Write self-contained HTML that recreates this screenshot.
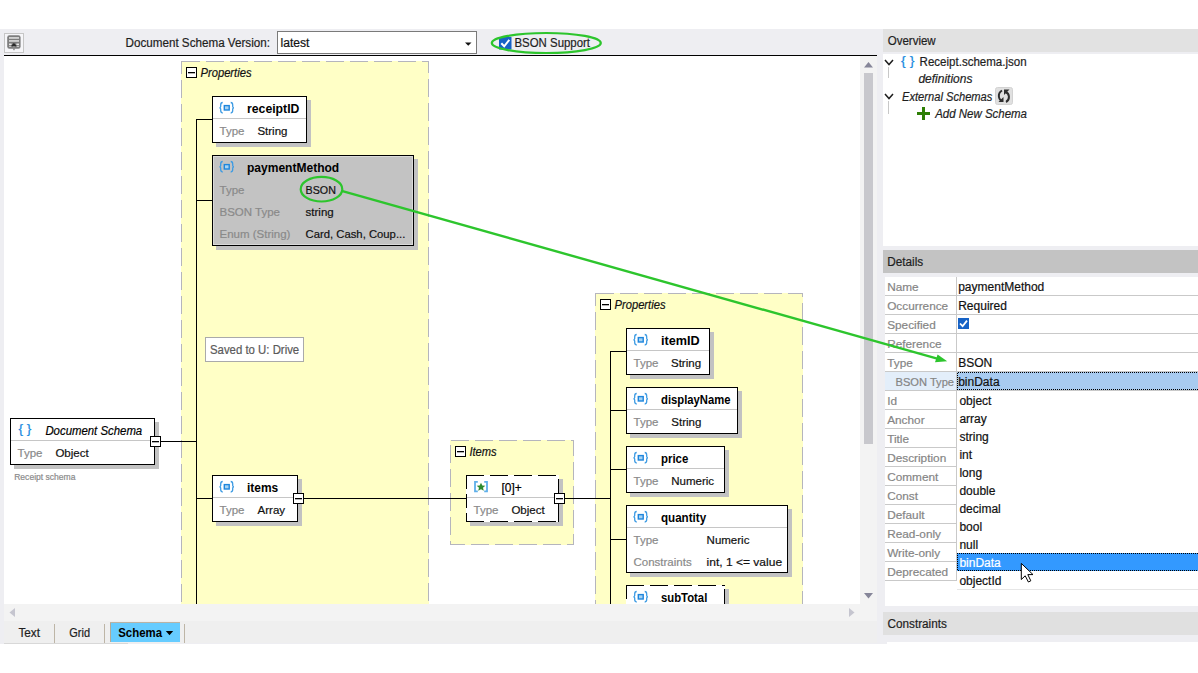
<!DOCTYPE html><html><head><meta charset="utf-8"><style>html,body{margin:0;padding:0;background:#fff;overflow:hidden;width:1198px;height:673px}svg{display:block}text{font-family:"Liberation Sans", sans-serif}</style></head><body>
<svg width="1198" height="673" viewBox="0 0 1198 673">
<g shape-rendering="crispEdges">
<rect x="0" y="29" width="1198" height="615" fill="#EEEEF2" />
<rect x="4.5" y="33.5" width="19" height="19" fill="#F6F6F9" stroke="#C6C6C6" stroke-width="1"/>
</g>
<g>
<rect x="7.2" y="35.2" width="13.4" height="13.6" rx="2.2" fill="#7E7E7E"/>
<rect x="9" y="37.3" width="10" height="1.3" fill="#F4F4F4"/>
<rect x="9" y="40.3" width="10" height="1.3" fill="#F4F4F4"/>
<rect x="9" y="43.6" width="2.6" height="1.3" fill="#F4F4F4"/><rect x="16.4" y="43.6" width="2.6" height="1.3" fill="#F4F4F4"/>
<rect x="9" y="45.8" width="2.6" height="1" fill="#D8D8D8"/><rect x="16.4" y="45.8" width="2.6" height="1" fill="#D8D8D8"/>
<path d="M10.8 46.3 L13.9 43 L17 46.3 Z" fill="#2A2A2A"/><rect x="13.2" y="46" width="1.5" height="4.2" fill="#8A8A8A"/>
</g>
<text x="125.5" y="47.2" font-size="12" fill="#1E1E1E" font-weight="normal" font-style="normal" textLength="144.5" lengthAdjust="spacingAndGlyphs" stroke="#1E1E1E" stroke-width="0.2" >Document Schema Version:</text>
<g shape-rendering="crispEdges">
<rect x="277.5" y="31.5" width="199" height="22" fill="#fff" stroke="#7A7A7A" stroke-width="1"/>
</g>
<text x="280.5" y="46.5" font-size="12" fill="#111" font-weight="normal" font-style="normal" textLength="29" lengthAdjust="spacingAndGlyphs" stroke="#111" stroke-width="0.2" >latest</text>
<path d="M465 42.5 L471.5 42.5 L468.25 45.8 Z" fill="#111"/>
<rect x="499" y="37" width="12.5" height="12.5" fill="#1662C6"/>
<path d="M501.3 43.2 L504.2 46.3 L509.3 39.8" fill="none" stroke="#fff" stroke-width="2"/>
<text x="514.5" y="46.8" font-size="12" fill="#1E1E1E" font-weight="normal" font-style="normal" textLength="75.5" lengthAdjust="spacingAndGlyphs" stroke="#1E1E1E" stroke-width="0.2" >BSON Support</text>
<ellipse cx="546.3" cy="43" rx="54.5" ry="10" fill="none" stroke="#2DC52D" stroke-width="2.2"/>
<g shape-rendering="crispEdges">
<rect x="4" y="55" width="873" height="1" fill="#000" />
<rect x="4" y="56" width="856" height="548" fill="#FFFFFF" />
<rect x="860" y="56" width="17" height="548" fill="#F3F3F3" />
<rect x="864" y="73" width="9" height="371" fill="#C8C8CD" />
<rect x="4" y="604" width="873" height="17" fill="#F3F3F3" />
<rect x="4" y="621" width="873" height="22" fill="#EFEFEF" />
</g>
<path d="M864 67.5 L873 67.5 L868.5 62 Z" fill="#868699"/>
<path d="M864 593 L873 593 L868.5 598.5 Z" fill="#868699"/>
<path d="M15 608 L15 617 L9.5 612.5 Z" fill="#C5C5CF"/>
<path d="M849 608 L849 617 L854.5 612.5 Z" fill="#C5C5CF"/>
<text x="18.4" y="637" font-size="12" fill="#1E1E1E" font-weight="normal" font-style="normal" textLength="21.6" lengthAdjust="spacingAndGlyphs" stroke="#1E1E1E" stroke-width="0.2" >Text</text>
<text x="69.3" y="637" font-size="12" fill="#1E1E1E" font-weight="normal" font-style="normal" textLength="20.7" lengthAdjust="spacingAndGlyphs" stroke="#1E1E1E" stroke-width="0.2" >Grid</text>
<g shape-rendering="crispEdges">
<rect x="54" y="624" width="1" height="19" fill="#BDB5A6" />
<rect x="104" y="624" width="1" height="19" fill="#BDB5A6" />
<rect x="110" y="622" width="70" height="20" fill="#66CCFF" />
<rect x="110" y="622" width="1" height="20" fill="#B3A995" />
<rect x="110" y="622" width="70" height="1" fill="#B9B3A5" />
<rect x="184" y="624" width="1" height="19" fill="#BDB5A6" />
<rect x="4" y="643" width="124" height="1" fill="#D8D8D8" />
</g>
<text x="118.2" y="637" font-size="12" fill="#000" font-weight="bold" font-style="normal" textLength="43.8" lengthAdjust="spacingAndGlyphs" >Schema</text>
<path d="M165.8 631 L173.2 631 L169.5 635.3 Z" fill="#000"/>
<g shape-rendering="crispEdges">
<rect x="883" y="29" width="315" height="23" fill="#E2E2E2" />
<rect x="883" y="52" width="315" height="2" fill="#EEEEF2" />
<rect x="883" y="54" width="315" height="192" fill="#FFFFFF" />
<rect x="883" y="250" width="315" height="23" fill="#C3C3C3" />
<rect x="885" y="277" width="313" height="329" fill="#FFFFFF" />
<rect x="883" y="612" width="315" height="23" fill="#E0E0E0" />
<rect x="887" y="642" width="311" height="2" fill="#FFFFFF" />
</g>
<text x="887.7" y="44.6" font-size="12" fill="#1E1E1E" font-weight="normal" font-style="normal" textLength="48" lengthAdjust="spacingAndGlyphs" stroke="#1E1E1E" stroke-width="0.2" >Overview</text>
<text x="887.2" y="265.7" font-size="12" fill="#1E1E1E" font-weight="normal" font-style="normal" textLength="36" lengthAdjust="spacingAndGlyphs" stroke="#1E1E1E" stroke-width="0.2" >Details</text>
<text x="887.5" y="627.8" font-size="12" fill="#1E1E1E" font-weight="normal" font-style="normal" textLength="59.4" lengthAdjust="spacingAndGlyphs" stroke="#1E1E1E" stroke-width="0.2" >Constraints</text>
<path d="M885 60 L889 64.5 L893 60" fill="none" stroke="#1E1E1E" stroke-width="1.5"/>
<path d="M885 94 L889 98.5 L893 94" fill="none" stroke="#1E1E1E" stroke-width="1.5"/>
<g shape-rendering="crispEdges">
<rect x="888" y="67" width="1" height="11" fill="#C8C8C8" />
<rect x="888" y="101" width="1" height="13" fill="#C8C8C8" />
</g>
<text x="901" y="65.2" font-size="12" fill="#1A8AE0" font-weight="normal" font-style="normal" textLength="13.4" lengthAdjust="spacingAndGlyphs" stroke="#1A8AE0" stroke-width="0.2" >{ }</text>
<text x="919.6" y="66" font-size="12" fill="#1E1E1E" font-weight="normal" font-style="normal" textLength="107" lengthAdjust="spacingAndGlyphs" stroke="#1E1E1E" stroke-width="0.2" >Receipt.schema.json</text>
<text x="918.4" y="82.7" font-size="12" fill="#1E1E1E" font-weight="normal" font-style="italic" textLength="54" lengthAdjust="spacingAndGlyphs" stroke="#1E1E1E" stroke-width="0.2" >definitions</text>
<text x="902" y="100.8" font-size="12" fill="#1E1E1E" font-weight="normal" font-style="italic" textLength="90.4" lengthAdjust="spacingAndGlyphs" stroke="#1E1E1E" stroke-width="0.2" >External Schemas</text>
<rect x="995.5" y="87.5" width="17" height="17" rx="2" fill="#E0E0E0" stroke="#D2D2D2"/>
<path d="M1002 90.5 C997.5 93 998 100 1002.5 101" fill="none" stroke="#2E2E2E" stroke-width="2"/>
<path d="M998.5 102 L1003.5 102 L1003.5 97 Z" fill="#2E2E2E"/>
<path d="M1005.5 92 C1010 93.5 1010 100 1006 102" fill="none" stroke="#2E2E2E" stroke-width="2"/>
<path d="M1004 89.5 L1009.5 89.5 L1004 95 Z" fill="#2E2E2E"/>
<g shape-rendering="crispEdges">
<rect x="917" y="112" width="13" height="3" fill="#2E7F06" />
<rect x="922" y="107" width="3" height="13" fill="#2E7F06" />
</g>
<text x="935.2" y="118" font-size="12" fill="#1E1E1E" font-weight="normal" font-style="italic" textLength="91.8" lengthAdjust="spacingAndGlyphs" stroke="#1E1E1E" stroke-width="0.2" >Add New Schema</text>
<g shape-rendering="crispEdges">
<rect x="885" y="372" width="71" height="18" fill="#E3EEFA" />
<rect x="957" y="372" width="241" height="18" fill="#A8CBF0" />
<rect x="885" y="295" width="313" height="1" fill="#C9C9C9" />
<rect x="885" y="314" width="313" height="1" fill="#C9C9C9" />
<rect x="885" y="333" width="313" height="1" fill="#C9C9C9" />
<rect x="885" y="352" width="313" height="1" fill="#C9C9C9" />
<rect x="885" y="371" width="313" height="1" fill="#C9C9C9" />
<rect x="885" y="390" width="313" height="1" fill="#C9C9C9" />
<rect x="885" y="409" width="71" height="1" fill="#C9C9C9" />
<rect x="885" y="428" width="71" height="1" fill="#C9C9C9" />
<rect x="885" y="447" width="71" height="1" fill="#C9C9C9" />
<rect x="885" y="466" width="71" height="1" fill="#C9C9C9" />
<rect x="885" y="485" width="71" height="1" fill="#C9C9C9" />
<rect x="885" y="504" width="71" height="1" fill="#C9C9C9" />
<rect x="885" y="523" width="71" height="1" fill="#C9C9C9" />
<rect x="885" y="542" width="71" height="1" fill="#C9C9C9" />
<rect x="885" y="561" width="71" height="1" fill="#C9C9C9" />
<rect x="885" y="580" width="71" height="1" fill="#C9C9C9" />
<rect x="956" y="277" width="1" height="304" fill="#C9C9C9" />
</g>
<text x="887.2" y="291" font-size="11.8" fill="#858585" font-weight="normal" font-style="normal" stroke="#858585" stroke-width="0.2" >Name</text>
<text x="887.2" y="310" font-size="11.8" fill="#858585" font-weight="normal" font-style="normal" stroke="#858585" stroke-width="0.2" >Occurrence</text>
<text x="887.2" y="329" font-size="11.8" fill="#858585" font-weight="normal" font-style="normal" stroke="#858585" stroke-width="0.2" >Specified</text>
<text x="887.2" y="348" font-size="11.8" fill="#858585" font-weight="normal" font-style="normal" stroke="#858585" stroke-width="0.2" >Reference</text>
<text x="887.2" y="367" font-size="11.8" fill="#858585" font-weight="normal" font-style="normal" stroke="#858585" stroke-width="0.2" >Type</text>
<text x="895.5" y="386" font-size="11.8" fill="#858585" font-weight="normal" font-style="normal" textLength="58.5" lengthAdjust="spacingAndGlyphs" stroke="#858585" stroke-width="0.2" >BSON Type</text>
<text x="887.2" y="405" font-size="11.8" fill="#858585" font-weight="normal" font-style="normal" stroke="#858585" stroke-width="0.2" >Id</text>
<text x="887.2" y="424" font-size="11.8" fill="#858585" font-weight="normal" font-style="normal" stroke="#858585" stroke-width="0.2" >Anchor</text>
<text x="887.2" y="443" font-size="11.8" fill="#858585" font-weight="normal" font-style="normal" stroke="#858585" stroke-width="0.2" >Title</text>
<text x="887.2" y="462" font-size="11.8" fill="#858585" font-weight="normal" font-style="normal" stroke="#858585" stroke-width="0.2" >Description</text>
<text x="887.2" y="481" font-size="11.8" fill="#858585" font-weight="normal" font-style="normal" stroke="#858585" stroke-width="0.2" >Comment</text>
<text x="887.2" y="500" font-size="11.8" fill="#858585" font-weight="normal" font-style="normal" stroke="#858585" stroke-width="0.2" >Const</text>
<text x="887.2" y="519" font-size="11.8" fill="#858585" font-weight="normal" font-style="normal" stroke="#858585" stroke-width="0.2" >Default</text>
<text x="887.2" y="538" font-size="11.8" fill="#858585" font-weight="normal" font-style="normal" stroke="#858585" stroke-width="0.2" >Read-only</text>
<text x="887.2" y="557" font-size="11.8" fill="#858585" font-weight="normal" font-style="normal" stroke="#858585" stroke-width="0.2" >Write-only</text>
<text x="887.2" y="576" font-size="11.8" fill="#858585" font-weight="normal" font-style="normal" stroke="#858585" stroke-width="0.2" >Deprecated</text>
<text x="958.2" y="291" font-size="12" fill="#111" font-weight="normal" font-style="normal" stroke="#111" stroke-width="0.2" >paymentMethod</text>
<text x="958.2" y="310" font-size="12" fill="#111" font-weight="normal" font-style="normal" stroke="#111" stroke-width="0.2" >Required</text>
<text x="958.2" y="367" font-size="12" fill="#111" font-weight="normal" font-style="normal" stroke="#111" stroke-width="0.2" >BSON</text>
<text x="958.2" y="386" font-size="12" fill="#111" font-weight="normal" font-style="normal" stroke="#111" stroke-width="0.2" >binData</text>
<rect x="958" y="318" width="11" height="11" fill="#1662C6"/>
<path d="M960 323.5 L962.6 326.2 L967 320.6" fill="none" stroke="#fff" stroke-width="1.8"/>
<defs><pattern id="dh" x="0" y="0" width="2" height="2" patternUnits="userSpaceOnUse"><rect x="0" y="0" width="1" height="1" fill="#000"/><rect x="1" y="1" width="1" height="1" fill="#000"/></pattern></defs>
<g shape-rendering="crispEdges">
<rect x="957" y="372" width="241" height="1" fill="url(#dh)" />
<rect x="957" y="389" width="241" height="1" fill="url(#dh)" />
<rect x="957" y="372" width="1" height="18" fill="url(#dh)" />
</g>
<g shape-rendering="crispEdges">
<rect x="957" y="391" width="241" height="198" fill="#FFFFFF" />
<rect x="957" y="589" width="241" height="1" fill="#E6E6E6" />
<rect x="957" y="553" width="241" height="18" fill="#3399FF" />
</g>
<g shape-rendering="crispEdges">
<rect x="957" y="553" width="241" height="1" fill="url(#dh)" />
<rect x="957" y="570" width="241" height="1" fill="url(#dh)" />
<rect x="957" y="553" width="1" height="18" fill="url(#dh)" />
</g>
<text x="959.4" y="404.5" font-size="12" fill="#111" font-weight="normal" font-style="normal" stroke="#111" stroke-width="0.2" >object</text>
<text x="959.4" y="422.5" font-size="12" fill="#111" font-weight="normal" font-style="normal" stroke="#111" stroke-width="0.2" >array</text>
<text x="959.4" y="440.5" font-size="12" fill="#111" font-weight="normal" font-style="normal" stroke="#111" stroke-width="0.2" >string</text>
<text x="959.4" y="458.5" font-size="12" fill="#111" font-weight="normal" font-style="normal" stroke="#111" stroke-width="0.2" >int</text>
<text x="959.4" y="476.5" font-size="12" fill="#111" font-weight="normal" font-style="normal" stroke="#111" stroke-width="0.2" >long</text>
<text x="959.4" y="494.5" font-size="12" fill="#111" font-weight="normal" font-style="normal" stroke="#111" stroke-width="0.2" >double</text>
<text x="959.4" y="512.5" font-size="12" fill="#111" font-weight="normal" font-style="normal" stroke="#111" stroke-width="0.2" >decimal</text>
<text x="959.4" y="530.5" font-size="12" fill="#111" font-weight="normal" font-style="normal" stroke="#111" stroke-width="0.2" >bool</text>
<text x="959.4" y="548.5" font-size="12" fill="#111" font-weight="normal" font-style="normal" stroke="#111" stroke-width="0.2" >null</text>
<text x="959.4" y="566.5" font-size="12" fill="#fff" font-weight="normal" font-style="normal" stroke="#fff" stroke-width="0.2" >binData</text>
<text x="959.4" y="584.5" font-size="12" fill="#111" font-weight="normal" font-style="normal" stroke="#111" stroke-width="0.2" >objectId</text>
<path d="M1021.3 563.4 L1021.3 579.5 L1025.2 575.8 L1028.4 582 L1030.8 580.8 L1027.8 574.6 L1033 574.6 Z" fill="#fff" stroke="#000" stroke-width="1"/>
<svg x="4" y="56" width="856" height="548" viewBox="4 56 856 548" overflow="hidden">
<rect x="181" y="61" width="248" height="600" fill="#FFFFC6" shape-rendering="crispEdges"/>
<rect x="181.5" y="61.5" width="247" height="599" fill="none" stroke="#B5B5BD" stroke-width="1" stroke-dasharray="18,6" shape-rendering="crispEdges"/>
<rect x="450" y="440" width="124" height="105" fill="#FFFFC6" shape-rendering="crispEdges"/>
<rect x="450.5" y="440.5" width="123" height="104" fill="none" stroke="#B5B5BD" stroke-width="1" stroke-dasharray="18,6" shape-rendering="crispEdges"/>
<rect x="595" y="293" width="208" height="400" fill="#FFFFC6" shape-rendering="crispEdges"/>
<rect x="595.5" y="293.5" width="207" height="399" fill="none" stroke="#B5B5BD" stroke-width="1" stroke-dasharray="18,6" shape-rendering="crispEdges"/>
<rect x="186.5" y="67.5" width="10" height="10" fill="#fff" stroke="#000" stroke-width="1.2" shape-rendering="crispEdges"/>
<rect x="188" y="72.0" width="7" height="1.3" fill="#000"/>
<text x="200.5" y="76.5" font-size="12" fill="#111" font-weight="normal" font-style="italic" textLength="51" lengthAdjust="spacingAndGlyphs" stroke="#111" stroke-width="0.2" >Properties</text>
<rect x="455.5" y="446.5" width="10" height="10" fill="#fff" stroke="#000" stroke-width="1.2" shape-rendering="crispEdges"/>
<rect x="457" y="451.0" width="7" height="1.3" fill="#000"/>
<text x="469.4" y="456" font-size="12" fill="#111" font-weight="normal" font-style="italic" textLength="27.3" lengthAdjust="spacingAndGlyphs" stroke="#111" stroke-width="0.2" >Items</text>
<rect x="600.5" y="299.5" width="10" height="10" fill="#fff" stroke="#000" stroke-width="1.2" shape-rendering="crispEdges"/>
<rect x="602" y="304.0" width="7" height="1.3" fill="#000"/>
<text x="614.5" y="308.5" font-size="12" fill="#111" font-weight="normal" font-style="italic" textLength="51" lengthAdjust="spacingAndGlyphs" stroke="#111" stroke-width="0.2" >Properties</text>
<g shape-rendering="crispEdges">
<rect x="196" y="119" width="1" height="485" fill="#000" />
<rect x="196" y="119" width="16" height="1" fill="#000" />
<rect x="196" y="200" width="16" height="1" fill="#000" />
<rect x="160" y="441" width="36" height="1" fill="#000" />
<rect x="196" y="498" width="16" height="1" fill="#000" />
<rect x="303" y="498" width="163" height="1" fill="#000" />
<rect x="564" y="498" width="46" height="1" fill="#000" />
<rect x="610" y="351" width="1" height="253" fill="#000" />
<rect x="610" y="351" width="16" height="1" fill="#000" />
<rect x="610" y="410" width="16" height="1" fill="#000" />
<rect x="610" y="469" width="16" height="1" fill="#000" />
<rect x="610" y="539" width="16" height="1" fill="#000" />
</g>
<g shape-rendering="crispEdges">
<rect x="216" y="100" width="95" height="47" fill="#C2C2C2"/>
<rect x="212" y="96" width="95" height="47" fill="#FFFFFF"/>
<rect x="213" y="118" width="93" height="1" fill="#C6C6C6"/>
<rect x="212.5" y="96.5" width="94" height="46" fill="none" stroke="#000" stroke-width="1.2"/>
</g>
<g transform="translate(219.5,102)">
<path d="M3.2 0.5 C1.5 0.5 1.2 1.5 1.2 3 L1.2 4.5 C1.2 5.3 0.8 5.7 0 5.8 C0.8 5.9 1.2 6.3 1.2 7.1 L1.2 8.6 C1.2 10.1 1.5 11 3.2 11" fill="none" stroke="#3D9BE3" stroke-width="1.3"/>
<path d="M11.2 0.5 C12.9 0.5 13.2 1.5 13.2 3 L13.2 4.5 C13.2 5.3 13.6 5.7 14.4 5.8 C13.6 5.9 13.2 6.3 13.2 7.1 L13.2 8.6 C13.2 10.1 12.9 11 11.2 11" fill="none" stroke="#3D9BE3" stroke-width="1.3"/>
<rect x="4.8" y="3.6" width="4.9" height="4.4" fill="#A7D3F2" stroke="#1E86DD" stroke-width="1.4"/>
</g>
<text x="247" y="112.5" font-size="12" fill="#000" font-weight="bold" font-style="normal" textLength="52.4" lengthAdjust="spacingAndGlyphs" >receiptID</text>
<text x="219.5" y="134.6" font-size="11.5" fill="#8A8A8A" font-weight="normal" font-style="normal" stroke="#8A8A8A" stroke-width="0.2" >Type</text>
<text x="257.4" y="134.6" font-size="11.5" fill="#111" font-weight="normal" font-style="normal" stroke="#111" stroke-width="0.2" >String</text>
<g shape-rendering="crispEdges">
<rect x="216" y="159" width="202" height="91" fill="#C2C2C2"/>
<rect x="212" y="155" width="202" height="91" fill="#C3C3C3"/>
<rect x="213.5" y="156.5" width="199" height="88" fill="none" stroke="#DADADA" stroke-width="1"/>
<rect x="212.5" y="155.5" width="201" height="90" fill="none" stroke="#000" stroke-width="1.2"/>
</g>
<g transform="translate(219.5,161)">
<path d="M3.2 0.5 C1.5 0.5 1.2 1.5 1.2 3 L1.2 4.5 C1.2 5.3 0.8 5.7 0 5.8 C0.8 5.9 1.2 6.3 1.2 7.1 L1.2 8.6 C1.2 10.1 1.5 11 3.2 11" fill="none" stroke="#3D9BE3" stroke-width="1.3"/>
<path d="M11.2 0.5 C12.9 0.5 13.2 1.5 13.2 3 L13.2 4.5 C13.2 5.3 13.6 5.7 14.4 5.8 C13.6 5.9 13.2 6.3 13.2 7.1 L13.2 8.6 C13.2 10.1 12.9 11 11.2 11" fill="none" stroke="#3D9BE3" stroke-width="1.3"/>
<rect x="4.8" y="3.6" width="4.9" height="4.4" fill="#A7D3F2" stroke="#1E86DD" stroke-width="1.4"/>
</g>
<text x="247" y="171.5" font-size="12" fill="#000" font-weight="bold" font-style="normal" textLength="92.2" lengthAdjust="spacingAndGlyphs" >paymentMethod</text>
<text x="219.5" y="193.6" font-size="11.5" fill="#8A8A8A" font-weight="normal" font-style="normal" stroke="#8A8A8A" stroke-width="0.2" >Type</text>
<text x="305.6" y="193.6" font-size="11.5" fill="#111" font-weight="normal" font-style="normal" textLength="30.3" lengthAdjust="spacingAndGlyphs" stroke="#111" stroke-width="0.2" >BSON</text>
<text x="219.5" y="216.0" font-size="11.5" fill="#8A8A8A" font-weight="normal" font-style="normal" stroke="#8A8A8A" stroke-width="0.2" >BSON Type</text>
<text x="305.6" y="216.0" font-size="11.5" fill="#111" font-weight="normal" font-style="normal" stroke="#111" stroke-width="0.2" >string</text>
<text x="219.5" y="238.39999999999998" font-size="11.5" fill="#8A8A8A" font-weight="normal" font-style="normal" stroke="#8A8A8A" stroke-width="0.2" >Enum (String)</text>
<text x="305.6" y="238.39999999999998" font-size="11.5" fill="#111" font-weight="normal" font-style="normal" textLength="99.7" lengthAdjust="spacingAndGlyphs" stroke="#111" stroke-width="0.2" >Card, Cash, Coup...</text>
<g shape-rendering="crispEdges">
<rect x="216" y="479" width="86" height="47" fill="#C2C2C2"/>
<rect x="212" y="475" width="86" height="47" fill="#FFFFFF"/>
<rect x="213" y="497" width="84" height="1" fill="#C6C6C6"/>
<rect x="212.5" y="475.5" width="85" height="46" fill="none" stroke="#000" stroke-width="1.2"/>
</g>
<g transform="translate(219.5,481)">
<path d="M3.2 0.5 C1.5 0.5 1.2 1.5 1.2 3 L1.2 4.5 C1.2 5.3 0.8 5.7 0 5.8 C0.8 5.9 1.2 6.3 1.2 7.1 L1.2 8.6 C1.2 10.1 1.5 11 3.2 11" fill="none" stroke="#3D9BE3" stroke-width="1.3"/>
<path d="M11.2 0.5 C12.9 0.5 13.2 1.5 13.2 3 L13.2 4.5 C13.2 5.3 13.6 5.7 14.4 5.8 C13.6 5.9 13.2 6.3 13.2 7.1 L13.2 8.6 C13.2 10.1 12.9 11 11.2 11" fill="none" stroke="#3D9BE3" stroke-width="1.3"/>
<rect x="4.8" y="3.6" width="4.9" height="4.4" fill="#A7D3F2" stroke="#1E86DD" stroke-width="1.4"/>
</g>
<text x="247" y="491.5" font-size="12" fill="#000" font-weight="bold" font-style="normal" textLength="31.2" lengthAdjust="spacingAndGlyphs" >items</text>
<text x="219.5" y="513.6" font-size="11.5" fill="#8A8A8A" font-weight="normal" font-style="normal" stroke="#8A8A8A" stroke-width="0.2" >Type</text>
<text x="257.6" y="513.6" font-size="11.5" fill="#111" font-weight="normal" font-style="normal" stroke="#111" stroke-width="0.2" >Array</text>
<g shape-rendering="crispEdges">
<rect x="630" y="332" width="84" height="47" fill="#C2C2C2"/>
<rect x="626" y="328" width="84" height="47" fill="#FFFFFF"/>
<rect x="627" y="350" width="82" height="1" fill="#C6C6C6"/>
<rect x="626.5" y="328.5" width="83" height="46" fill="none" stroke="#000" stroke-width="1.2"/>
</g>
<g transform="translate(633.5,334)">
<path d="M3.2 0.5 C1.5 0.5 1.2 1.5 1.2 3 L1.2 4.5 C1.2 5.3 0.8 5.7 0 5.8 C0.8 5.9 1.2 6.3 1.2 7.1 L1.2 8.6 C1.2 10.1 1.5 11 3.2 11" fill="none" stroke="#3D9BE3" stroke-width="1.3"/>
<path d="M11.2 0.5 C12.9 0.5 13.2 1.5 13.2 3 L13.2 4.5 C13.2 5.3 13.6 5.7 14.4 5.8 C13.6 5.9 13.2 6.3 13.2 7.1 L13.2 8.6 C13.2 10.1 12.9 11 11.2 11" fill="none" stroke="#3D9BE3" stroke-width="1.3"/>
<rect x="4.8" y="3.6" width="4.9" height="4.4" fill="#A7D3F2" stroke="#1E86DD" stroke-width="1.4"/>
</g>
<text x="661" y="344.5" font-size="12" fill="#000" font-weight="bold" font-style="normal" textLength="38.7" lengthAdjust="spacingAndGlyphs" >itemID</text>
<text x="633.5" y="366.6" font-size="11.5" fill="#8A8A8A" font-weight="normal" font-style="normal" stroke="#8A8A8A" stroke-width="0.2" >Type</text>
<text x="671" y="366.6" font-size="11.5" fill="#111" font-weight="normal" font-style="normal" stroke="#111" stroke-width="0.2" >String</text>
<g shape-rendering="crispEdges">
<rect x="630" y="391" width="112" height="47" fill="#C2C2C2"/>
<rect x="626" y="387" width="112" height="47" fill="#FFFFFF"/>
<rect x="627" y="409" width="110" height="1" fill="#C6C6C6"/>
<rect x="626.5" y="387.5" width="111" height="46" fill="none" stroke="#000" stroke-width="1.2"/>
</g>
<g transform="translate(633.5,393)">
<path d="M3.2 0.5 C1.5 0.5 1.2 1.5 1.2 3 L1.2 4.5 C1.2 5.3 0.8 5.7 0 5.8 C0.8 5.9 1.2 6.3 1.2 7.1 L1.2 8.6 C1.2 10.1 1.5 11 3.2 11" fill="none" stroke="#3D9BE3" stroke-width="1.3"/>
<path d="M11.2 0.5 C12.9 0.5 13.2 1.5 13.2 3 L13.2 4.5 C13.2 5.3 13.6 5.7 14.4 5.8 C13.6 5.9 13.2 6.3 13.2 7.1 L13.2 8.6 C13.2 10.1 12.9 11 11.2 11" fill="none" stroke="#3D9BE3" stroke-width="1.3"/>
<rect x="4.8" y="3.6" width="4.9" height="4.4" fill="#A7D3F2" stroke="#1E86DD" stroke-width="1.4"/>
</g>
<text x="661" y="403.5" font-size="12" fill="#000" font-weight="bold" font-style="normal" textLength="69.5" lengthAdjust="spacingAndGlyphs" >displayName</text>
<text x="633.5" y="425.6" font-size="11.5" fill="#8A8A8A" font-weight="normal" font-style="normal" stroke="#8A8A8A" stroke-width="0.2" >Type</text>
<text x="671.3" y="425.6" font-size="11.5" fill="#111" font-weight="normal" font-style="normal" stroke="#111" stroke-width="0.2" >String</text>
<g shape-rendering="crispEdges">
<rect x="630" y="450" width="99" height="47" fill="#C2C2C2"/>
<rect x="626" y="446" width="99" height="47" fill="#FFFFFF"/>
<rect x="627" y="468" width="97" height="1" fill="#C6C6C6"/>
<rect x="626.5" y="446.5" width="98" height="46" fill="none" stroke="#000" stroke-width="1.2"/>
</g>
<g transform="translate(633.5,452)">
<path d="M3.2 0.5 C1.5 0.5 1.2 1.5 1.2 3 L1.2 4.5 C1.2 5.3 0.8 5.7 0 5.8 C0.8 5.9 1.2 6.3 1.2 7.1 L1.2 8.6 C1.2 10.1 1.5 11 3.2 11" fill="none" stroke="#3D9BE3" stroke-width="1.3"/>
<path d="M11.2 0.5 C12.9 0.5 13.2 1.5 13.2 3 L13.2 4.5 C13.2 5.3 13.6 5.7 14.4 5.8 C13.6 5.9 13.2 6.3 13.2 7.1 L13.2 8.6 C13.2 10.1 12.9 11 11.2 11" fill="none" stroke="#3D9BE3" stroke-width="1.3"/>
<rect x="4.8" y="3.6" width="4.9" height="4.4" fill="#A7D3F2" stroke="#1E86DD" stroke-width="1.4"/>
</g>
<text x="661" y="462.5" font-size="12" fill="#000" font-weight="bold" font-style="normal" textLength="27.3" lengthAdjust="spacingAndGlyphs" >price</text>
<text x="633.5" y="484.6" font-size="11.5" fill="#8A8A8A" font-weight="normal" font-style="normal" stroke="#8A8A8A" stroke-width="0.2" >Type</text>
<text x="671.3" y="484.6" font-size="11.5" fill="#111" font-weight="normal" font-style="normal" stroke="#111" stroke-width="0.2" >Numeric</text>
<g shape-rendering="crispEdges">
<rect x="630" y="509" width="162" height="68" fill="#C2C2C2"/>
<rect x="626" y="505" width="162" height="68" fill="#FFFFFF"/>
<rect x="627" y="527" width="160" height="1" fill="#C6C6C6"/>
<rect x="626.5" y="505.5" width="161" height="67" fill="none" stroke="#000" stroke-width="1.2"/>
</g>
<g transform="translate(633.5,511)">
<path d="M3.2 0.5 C1.5 0.5 1.2 1.5 1.2 3 L1.2 4.5 C1.2 5.3 0.8 5.7 0 5.8 C0.8 5.9 1.2 6.3 1.2 7.1 L1.2 8.6 C1.2 10.1 1.5 11 3.2 11" fill="none" stroke="#3D9BE3" stroke-width="1.3"/>
<path d="M11.2 0.5 C12.9 0.5 13.2 1.5 13.2 3 L13.2 4.5 C13.2 5.3 13.6 5.7 14.4 5.8 C13.6 5.9 13.2 6.3 13.2 7.1 L13.2 8.6 C13.2 10.1 12.9 11 11.2 11" fill="none" stroke="#3D9BE3" stroke-width="1.3"/>
<rect x="4.8" y="3.6" width="4.9" height="4.4" fill="#A7D3F2" stroke="#1E86DD" stroke-width="1.4"/>
</g>
<text x="661" y="521.5" font-size="12" fill="#000" font-weight="bold" font-style="normal" textLength="45.1" lengthAdjust="spacingAndGlyphs" >quantity</text>
<text x="633.5" y="543.6" font-size="11.5" fill="#8A8A8A" font-weight="normal" font-style="normal" stroke="#8A8A8A" stroke-width="0.2" >Type</text>
<text x="706.6" y="543.6" font-size="11.5" fill="#111" font-weight="normal" font-style="normal" stroke="#111" stroke-width="0.2" >Numeric</text>
<text x="633.5" y="566.0" font-size="11.5" fill="#8A8A8A" font-weight="normal" font-style="normal" stroke="#8A8A8A" stroke-width="0.2" >Constraints</text>
<text x="706.6" y="566.0" font-size="11.5" fill="#111" font-weight="normal" font-style="normal" textLength="75.5" lengthAdjust="spacingAndGlyphs" stroke="#111" stroke-width="0.2" >int, 1 &lt;= value</text>
<g shape-rendering="crispEdges">
<rect x="630" y="589" width="99" height="47" fill="#C2C2C2"/>
<rect x="626" y="585" width="99" height="47" fill="#FFFFFF"/>
<rect x="627" y="607" width="97" height="1" fill="#C6C6C6"/>
<path d="M626 585.5 H725" stroke="#000" stroke-width="1" stroke-dasharray="18,6" fill="none"/>
<path d="M626 631.5 H725" stroke="#000" stroke-width="1" stroke-dasharray="18,6" fill="none"/>
<path d="M626.5 585 V632" stroke="#000" stroke-width="1" stroke-dasharray="14,5" fill="none"/>
<rect x="724" y="589" width="1" height="43" fill="#000"/>
</g>
<g transform="translate(633.5,591)">
<path d="M3.2 0.5 C1.5 0.5 1.2 1.5 1.2 3 L1.2 4.5 C1.2 5.3 0.8 5.7 0 5.8 C0.8 5.9 1.2 6.3 1.2 7.1 L1.2 8.6 C1.2 10.1 1.5 11 3.2 11" fill="none" stroke="#3D9BE3" stroke-width="1.3"/>
<path d="M11.2 0.5 C12.9 0.5 13.2 1.5 13.2 3 L13.2 4.5 C13.2 5.3 13.6 5.7 14.4 5.8 C13.6 5.9 13.2 6.3 13.2 7.1 L13.2 8.6 C13.2 10.1 12.9 11 11.2 11" fill="none" stroke="#3D9BE3" stroke-width="1.3"/>
<rect x="4.8" y="3.6" width="4.9" height="4.4" fill="#A7D3F2" stroke="#1E86DD" stroke-width="1.4"/>
</g>
<text x="661" y="601.5" font-size="12" fill="#000" font-weight="bold" font-style="normal" textLength="46.3" lengthAdjust="spacingAndGlyphs" >subTotal</text>
<g shape-rendering="crispEdges">
<rect x="14" y="422" width="145" height="47" fill="#C2C2C2"/>
<rect x="10" y="418" width="145" height="47" fill="#FFFFFF"/>
<rect x="11" y="440" width="143" height="1" fill="#C6C6C6"/>
<rect x="10.5" y="418.5" width="144" height="46" fill="none" stroke="#000" stroke-width="1.2"/>
</g>
<text x="45.4" y="434.5" font-size="12" fill="#000" font-weight="normal" font-style="italic" textLength="96.8" lengthAdjust="spacingAndGlyphs" stroke="#000" stroke-width="0.2" >Document Schema</text>
<text x="17.5" y="456.6" font-size="11.5" fill="#8A8A8A" font-weight="normal" font-style="normal" stroke="#8A8A8A" stroke-width="0.2" >Type</text>
<text x="55.4" y="456.6" font-size="11.5" fill="#111" font-weight="normal" font-style="normal" stroke="#111" stroke-width="0.2" >Object</text>
<text x="18.4" y="432.6" font-size="12" fill="#1A8AE0" font-weight="normal" font-style="normal" textLength="13" lengthAdjust="spacingAndGlyphs" stroke="#1A8AE0" stroke-width="0.2" >{ }</text>
<g shape-rendering="crispEdges">
<rect x="470" y="479" width="93" height="47" fill="#C2C2C2"/>
<rect x="466" y="475" width="93" height="47" fill="#FFFFFF"/>
<rect x="467" y="497" width="91" height="1" fill="#C6C6C6"/>
<path d="M466 475.5 H559" stroke="#000" stroke-width="1" stroke-dasharray="18,6" fill="none"/>
<path d="M466 521.5 H559" stroke="#000" stroke-width="1" stroke-dasharray="18,6" fill="none"/>
<path d="M466.5 475 V522" stroke="#000" stroke-width="1" stroke-dasharray="14,5" fill="none"/>
<rect x="558" y="479" width="1" height="43" fill="#000"/>
</g>
<text x="501.5" y="491.5" font-size="12" fill="#000" font-weight="normal" font-style="normal" textLength="20.2" lengthAdjust="spacingAndGlyphs" stroke="#000" stroke-width="0.2" >[0]+</text>
<text x="473.5" y="513.6" font-size="11.5" fill="#8A8A8A" font-weight="normal" font-style="normal" stroke="#8A8A8A" stroke-width="0.2" >Type</text>
<text x="511.4" y="513.6" font-size="11.5" fill="#111" font-weight="normal" font-style="normal" stroke="#111" stroke-width="0.2" >Object</text>
<g transform="translate(474,481)"><path d="M3.8 0.9 L1 0.9 L1 10.4 L3.8 10.4 M10.2 0.9 L13 0.9 L13 10.4 L10.2 10.4" fill="none" stroke="#5FB0EA" stroke-width="1.8"/><path d="M7 1.8 L8.3 4.6 L11.3 4.8 L9 6.8 L9.8 9.8 L7 8.2 L4.2 9.8 L5 6.8 L2.7 4.8 L5.7 4.6 Z" fill="#2E8B2E"/></g>
<rect x="150.5" y="436.5" width="10" height="10" fill="#fff" stroke="#000" stroke-width="1.2" shape-rendering="crispEdges"/>
<rect x="152" y="441.0" width="7" height="1.3" fill="#000"/>
<rect x="293.5" y="493.5" width="10" height="10" fill="#fff" stroke="#000" stroke-width="1.2" shape-rendering="crispEdges"/>
<rect x="295" y="498.0" width="7" height="1.3" fill="#000"/>
<rect x="554.5" y="493.5" width="10" height="10" fill="#fff" stroke="#000" stroke-width="1.2" shape-rendering="crispEdges"/>
<rect x="556" y="498.0" width="7" height="1.3" fill="#000"/>
<text x="14.2" y="480" font-size="9" fill="#8A8A8A" font-weight="normal" font-style="normal" textLength="61.3" lengthAdjust="spacingAndGlyphs" stroke="#8A8A8A" stroke-width="0.2" >Receipt schema</text>
<rect x="205.5" y="337.5" width="98" height="24" fill="#fff" stroke="#AAAAAA" stroke-width="1" shape-rendering="crispEdges"/>
<text x="210" y="353.8" font-size="12" fill="#5A5A5A" font-weight="normal" font-style="normal" textLength="89.2" lengthAdjust="spacingAndGlyphs" stroke="#5A5A5A" stroke-width="0.2" >Saved to U: Drive</text>
</svg>
<ellipse cx="321.5" cy="189.2" rx="20.8" ry="12.3" fill="none" stroke="#2DC52D" stroke-width="2.2"/>
<line x1="342.5" y1="191.1" x2="939" y2="359.2" stroke="#2DC52D" stroke-width="2.4"/>
<path d="M947.2 361.2 L935 362.3 L937.6 354.5 Z" fill="#2DC52D"/>
</svg></body></html>
